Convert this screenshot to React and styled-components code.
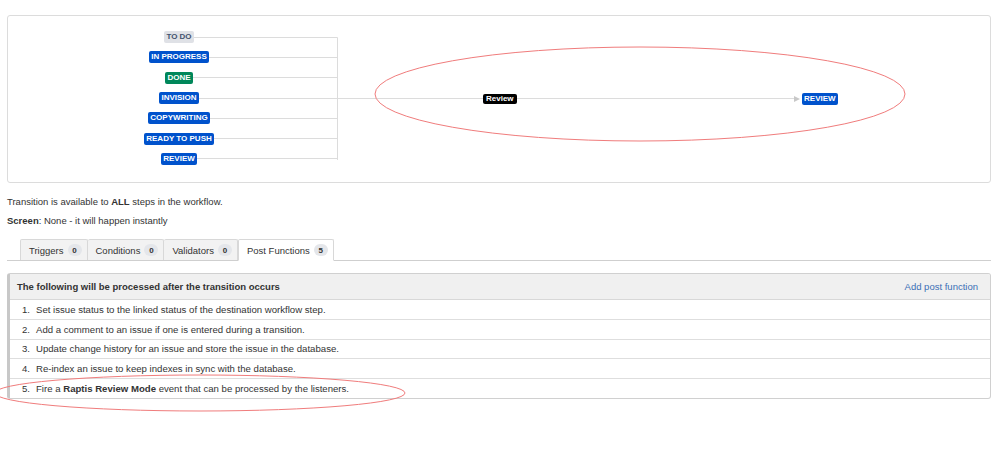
import React from "react";
import styled, { createGlobalStyle } from "styled-components";

const Global = createGlobalStyle`
  html, body { margin: 0; padding: 0; background: #fff; }
  body { font-family: "Liberation Sans", Arial, sans-serif; color: #333; }
`;

const Page = styled.div`
  position: relative;
  width: 999px;
  height: 460px;
  padding: 15px 8px 0 7px;
  box-sizing: border-box;
  overflow: hidden;
`;

const DiagramBox = styled.div`
  display: flex;
  align-items: stretch;
  border: 1px solid #dcdcdc;
  border-radius: 3px;
  padding: 11px 13px 12px 13px;
  height: 168px;
  box-sizing: border-box;
`;

const Sources = styled.div`
  display: flex;
  flex-direction: column;
  width: 316px;
`;

const SourceRow = styled.div`
  height: 20.3px;
  display: flex;
  align-items: center;
  justify-content: center;
  background: linear-gradient(#dcdcdc, #dcdcdc) right center / 50% 1px no-repeat;
`;

const colors = {
  blue: { bg: "#0052cc", fg: "#fff" },
  green: { bg: "#00875a", fg: "#fff" },
  gray: { bg: "#dfe1e6", fg: "#42526e" },
  black: { bg: "#000", fg: "#fff" },
};

const Lozenge = styled.span`
  display: inline-block;
  height: ${(p) => (p.$small ? 10 : 12)}px;
  line-height: ${(p) => (p.$small ? 10 : 12)}px;
  padding: 0 ${(p) => (p.$small ? 3 : 2.5)}px;
  border-radius: 2px;
  font-size: 8px;
  font-weight: bold;
  text-transform: ${(p) => (p.$small ? "none" : "uppercase")};
  white-space: nowrap;
  background: ${(p) => colors[p.$tone].bg};
  color: ${(p) => colors[p.$tone].fg};
`;

const Spine = styled.div`
  width: 1px;
  background: #dcdcdc;
  margin: 10px 0;
  border-radius: 1px;
`;

const Outgoing = styled.div`
  display: flex;
  align-items: center;
  align-self: center;
`;

const Line = styled.div`
  height: 1px;
  background: #dcdcdc;
  width: ${(p) => p.$w}px;
`;

const Arrow = styled.div`
  width: 0;
  height: 0;
  border-top: 3.5px solid transparent;
  border-bottom: 3.5px solid transparent;
  border-left: 6px solid #c8c8c8;
  margin-right: 2px;
`;

const Info = styled.p`
  margin: 0;
  font-size: 9.5px;
  line-height: 14px;
  color: #333;
  margin-top: ${(p) => p.$mt}px;
`;

const TabBar = styled.div`
  display: flex;
  padding-left: 13px;
  margin-top: 11px;
  border-bottom: 1px solid #cfcfcf;
  height: 21px;
`;

const Tab = styled.div`
  display: flex;
  align-items: center;
  gap: 4px;
  box-sizing: border-box;
  padding: 0 5px 0 8px;
  font-size: 9.5px;
  color: #333;
  background: ${(p) => (p.$active ? "#fff" : "#f2f2f2")};
  border: 1px solid #d8d8d8;
  border-left-width: ${(p) => (p.$first || p.$active ? 1 : 0)}px;
  border-bottom: ${(p) => (p.$active ? "1px solid #fff" : "none")};
  border-radius: 2px 2px 0 0;
  height: ${(p) => (p.$active ? 22 : 21)}px;
`;

const Badge = styled.span`
  display: inline-flex;
  align-items: center;
  justify-content: center;
  min-width: 14px;
  height: 12px;
  padding: 0 2px;
  box-sizing: border-box;
  border-radius: 6px;
  background: #e4e6ea;
  color: #333;
  font-size: 8px;
  font-weight: bold;
`;

const Panel = styled.div`
  margin-top: 12px;
  border: 1px solid #d0d0d0;
  border-left: 3px solid #c8c8c8;
  border-radius: 3px;
  overflow: hidden;
`;

const PanelHeader = styled.div`
  display: flex;
  align-items: center;
  justify-content: space-between;
  height: 25px;
  padding: 0 12px 0 7px;
  background: #f0f0f0;
  border-bottom: 1px solid #d8d8d8;
  font-size: 9.5px;
`;

const HeaderTitle = styled.span`
  font-weight: bold;
  color: #333;
`;

const AddLink = styled.a`
  color: #3b6fb6;
  text-decoration: none;
  font-size: 9.5px;
`;

const StepRow = styled.div`
  display: grid;
  grid-template-columns: 14px 1fr;
  column-gap: 6px;
  align-items: center;
  height: 18.8px;
  padding-left: 6px;
  font-size: 9.6px;
  color: #333;
  border-top: ${(p) => (p.$first ? "none" : "1px solid #dedede")};
`;

const Num = styled.span`
  text-align: right;
`;

const Overlay = styled.svg`
  position: absolute;
  left: 0;
  top: 0;
  pointer-events: none;
`;

const sources = [
  ["To Do", "gray"],
  ["In Progress", "blue"],
  ["Done", "green"],
  ["Invision", "blue"],
  ["Copywriting", "blue"],
  ["Ready to push", "blue"],
  ["Review", "blue"],
];

const tabs = [
  ["Triggers", 0],
  ["Conditions", 0],
  ["Validators", 0],
  ["Post Functions", 5, true],
];

const steps = [
  "Set issue status to the linked status of the destination workflow step.",
  "Add a comment to an issue if one is entered during a transition.",
  "Update change history for an issue and store the issue in the database.",
  "Re-index an issue to keep indexes in sync with the database.",
  null,
];

export default function App() {
  return (
    <>
      <Global />
      <Page>
        <DiagramBox>
          <Sources>
            {sources.map(([name, tone]) => (
              <SourceRow key={name}>
                <Lozenge $tone={tone}>{name}</Lozenge>
              </SourceRow>
            ))}
          </Sources>
          <Spine />
          <Outgoing>
            <Line $w={145} />
            <Lozenge $tone="black" $small>Review</Lozenge>
            <Line $w={277} />
            <Arrow />
            <Lozenge $tone="blue">Review</Lozenge>
          </Outgoing>
        </DiagramBox>

        <Info $mt={12}>
          Transition is available to <b>ALL</b> steps in the workflow.
        </Info>
        <Info $mt={5}>
          <b>Screen</b>: None - it will happen instantly
        </Info>

        <TabBar>
          {tabs.map(([label, count, active], i) => (
            <Tab key={label} $active={active} $first={i === 0}>
              {label}
              <Badge>{count}</Badge>
            </Tab>
          ))}
        </TabBar>

        <Panel>
          <PanelHeader>
            <HeaderTitle>The following will be processed after the transition occurs</HeaderTitle>
            <AddLink href="#">Add post function</AddLink>
          </PanelHeader>
          {steps.map((text, i) => (
            <StepRow key={i} $first={i === 0}>
              <Num>{i + 1}.</Num>
              <span>
                {text ?? (
                  <>
                    Fire a <b>Raptis Review Mode</b> event that can be processed by the listeners.
                  </>
                )}
              </span>
            </StepRow>
          ))}
        </Panel>

        <Overlay width="999" height="460" viewBox="0 0 999 460">
          <ellipse cx="640" cy="94" rx="265" ry="47" fill="none" stroke="#f07c7c" strokeWidth="1" />
          <ellipse cx="200" cy="393" rx="205" ry="18" fill="none" stroke="#f07c7c" strokeWidth="1" />
        </Overlay>
      </Page>
    </>
  );
}
